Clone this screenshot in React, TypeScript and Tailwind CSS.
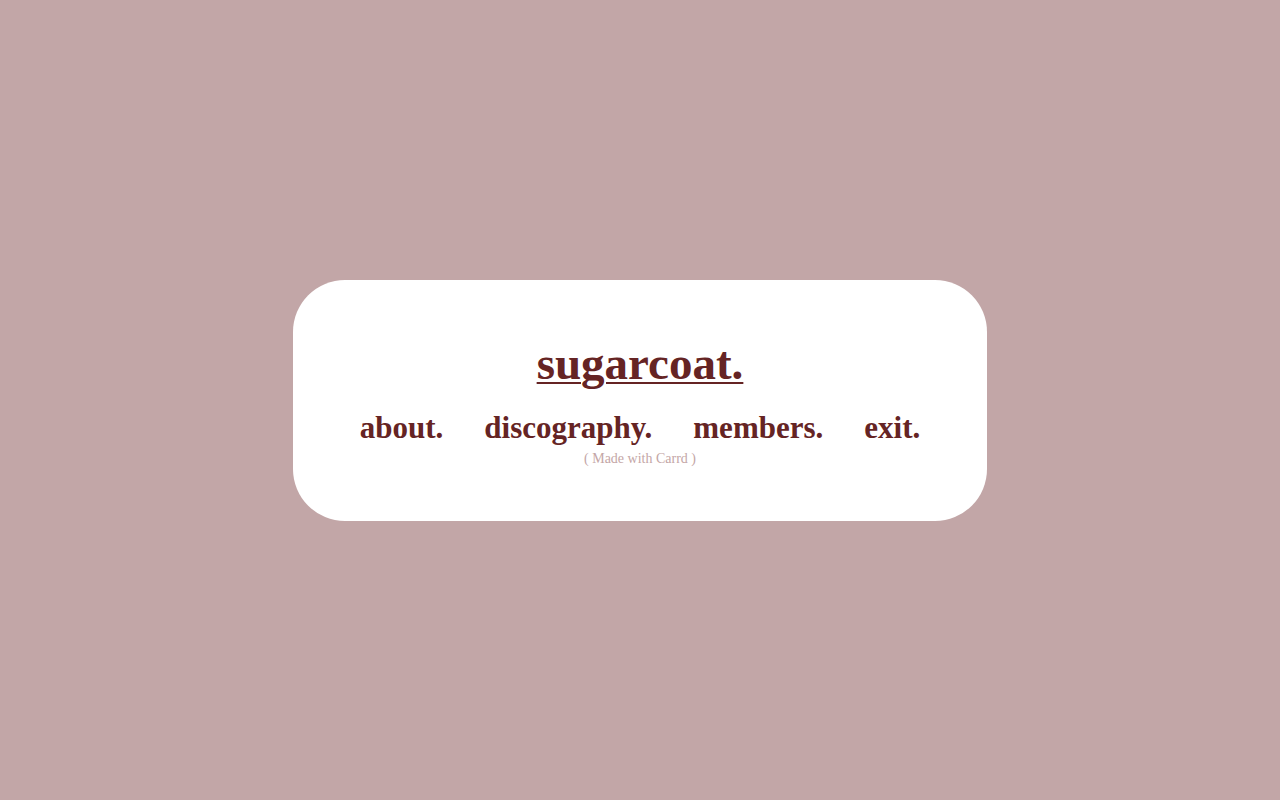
import React from "react";

export default function App() {
  const serif = { fontFamily: '"Liberation Serif", "DejaVu Serif", serif' };
  return (
    <div className="w-full h-[800px] bg-[#c2a6a7] flex items-center justify-center" style={serif}>
      <div className="w-[694px] h-[241px] bg-white rounded-[52px] flex flex-col items-center pt-[53px]">
        <a className="text-[47px] leading-[60px] font-bold text-[#652424] underline decoration-2 underline-offset-[3px]">
          sugarcoat.
        </a>
        <nav className="mt-[15px] flex gap-[41px] text-[31px] leading-[40px] font-bold text-[#652424]">
          <a>about.</a>
          <a>discography.</a>
          <a>members.</a>
          <a>exit.</a>
        </nav>
        <div className="mt-[1px] text-[14px] leading-[20px] text-[#c4a6a6]">( Made with Carrd )</div>
      </div>
    </div>
  );
}
